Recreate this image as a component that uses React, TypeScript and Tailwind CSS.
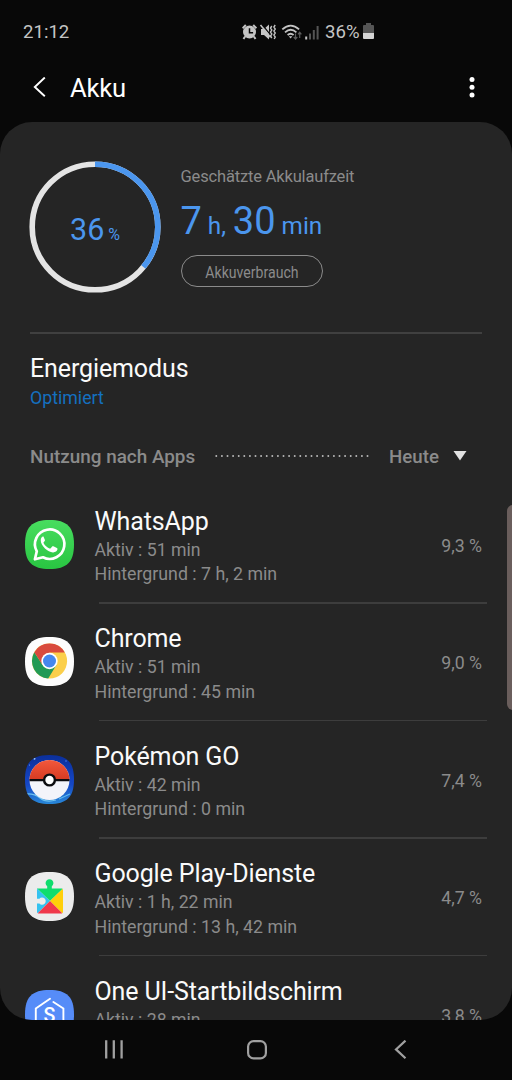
import React from 'react';

type AppUsage = {
  name: string;
  active: string;
  background: string;
  percent: string;
  icon: React.ReactNode;
};

// Rounded-square outline shared by all launcher icons
const SQUIRCLE = 'M24.5 0C42 0 49 7 49 24.5S42 49 24.5 49 0 42 0 24.5 7 0 24.5 0Z';

const WhatsAppIcon = () => (
  <svg width="49" height="49" viewBox="0 0 49 49" fill="none">
    <defs>
      <linearGradient id="wa" x1="0" y1="0" x2="0" y2="1">
        <stop offset="0" stopColor="#48dd5f" />
        <stop offset="1" stopColor="#29c542" />
      </linearGradient>
    </defs>
    <path d={SQUIRCLE} fill="url(#wa)" />
    <path
      d="M9.9 39.3 11.8 31.3A14.7 14.7 0 1 1 18 37.3Z"
      stroke="#fff"
      strokeWidth="2.7"
      strokeLinejoin="round"
    />
    <path
      transform="translate(-1.9 -1.3) scale(1.05)"
      d="M19.2 16.8c-1.2.2-2.4 1.7-2.4 3.7 0 5.4 7 11.4 11.6 11.6 2.2.1 4.1-1.3 4.3-2.7.1-1 0-1.2-.5-1.5l-3.3-1.6c-.6-.3-1-.2-1.4.3l-1.2 1.5c-.3.4-.7.4-1.2.2-2.4-1-4.3-2.8-5.5-5-.3-.5-.1-.8.2-1.1l.8-1c.3-.4.3-.8.1-1.2l-1.3-3c-.3-.4-.7-.4-1.2-.2Z"
      fill="#fff"
    />
  </svg>
);

const ChromeIcon = () => (
  <svg width="49" height="49" viewBox="0 0 49 49">
    <path d={SQUIRCLE} fill="#fdfdfd" />
    <circle cx="24.5" cy="24" r="17.6" fill="#fbcf4b" />
    <path d="M24.5 24 17.6 28 9.3 15.2A17.6 17.6 0 0 0 23.2 41.5L31.4 28Z" fill="#219a55" />
    <path d="M9.3 15.2A17.6 17.6 0 0 1 39.8 15.6H24.5V24L17.6 28Z" fill="#d94a3d" />
    <circle cx="24.5" cy="24" r="8.2" fill="#fff" />
    <circle cx="24.5" cy="24" r="6.5" fill="#4587ee" />
  </svg>
);

const PokemonIcon = () => (
  <svg width="49" height="49" viewBox="0 0 49 49">
    <defs>
      <linearGradient id="sky" x1="0" y1="0" x2="0" y2="1">
        <stop offset="0" stopColor="#0b2f9b" />
        <stop offset=".6" stopColor="#1547c6" />
        <stop offset="1" stopColor="#2888d8" />
      </linearGradient>
      <linearGradient id="red" x1="0" y1="0" x2="0" y2="1">
        <stop offset="0" stopColor="#f2583c" />
        <stop offset="1" stopColor="#d63a22" />
      </linearGradient>
      <clipPath id="pk">
        <path d={SQUIRCLE} />
      </clipPath>
    </defs>
    <g clipPath="url(#pk)">
      <path d="M0 0H49V49H0Z" fill="url(#sky)" />
      <path d="M0 39Q9 38 15 43T31 45" stroke="#6fc3ef" strokeWidth="1.3" fill="none" />
      <path d="M34 44l11-5" stroke="#5cb9ee" strokeWidth="1.3" />
      <circle cx="9.5" cy="3.8" r="1" fill="#9bc8ff" />
      <circle cx="4.5" cy="10" r=".6" fill="#79a9f5" />
      <circle cx="41" cy="6" r=".7" fill="#5f8ff0" />
    </g>
    <circle cx="24.5" cy="25" r="20" fill="#f3f4fa" />
    <path d="M4.5 25a20 20 0 0 1 40 0Z" fill="url(#red)" />
    <path d="M4.5 24H44.5V26.3H4.5Z" fill="#0c0c10" />
    <circle cx="24.5" cy="25" r="6.6" fill="#0c0c10" />
    <circle cx="24.5" cy="25" r="4.2" fill="#fff" />
  </svg>
);

const PlayServicesIcon = () => (
  <svg width="49" height="49" viewBox="0 0 49 49">
    <defs>
      <clipPath id="puzzle">
        <path d="M12 16.4H22.2V14.2A3.9 3.9 0 1 1 26.8 14.2V16.4H36.6Q38 16.4 38 17.8V40Q38 41.4 36.6 41.4H13.4Q12 41.4 12 40V31.4H14.4A3.6 3.6 0 1 0 14.4 26.7H12Z" />
      </clipPath>
    </defs>
    <path d={SQUIRCLE} fill="#ececec" />
    <g clipPath="url(#puzzle)">
      <path d="M11 5H39V15.5L25 29 11 15.5Z" fill="#0fdd6d" />
      <path d="M11 15.5 25 29 11 43Z" fill="#35c2f0" />
      <path d="M39 15.5 25 29 39 43Z" fill="#ffcf0a" />
      <path d="M11 43 25 29 39 43Z" fill="#f0384b" />
    </g>
  </svg>
);

const OneUiIcon = () => (
  <svg width="49" height="49" viewBox="0 0 49 49" fill="none">
    <path d={SQUIRCLE} fill="#568cf8" />
    <path d="M25 8.8 10.8 18.4V34L24.5 42 38.4 34V18.4L28.4 12" stroke="#fff" strokeWidth="1.9" strokeLinecap="round" />
    <text x="24.5" y="32.2" textAnchor="middle" fill="#fff" fontFamily="Roboto, sans-serif" fontSize="19.5" fontWeight="500">
      S
    </text>
  </svg>
);

const APPS: AppUsage[] = [
  { name: 'WhatsApp', active: '51 min', background: '7 h, 2 min', percent: '9,3 %', icon: <WhatsAppIcon /> },
  { name: 'Chrome', active: '51 min', background: '45 min', percent: '9,0 %', icon: <ChromeIcon /> },
  { name: 'Pokémon GO', active: '42 min', background: '0 min', percent: '7,4 %', icon: <PokemonIcon /> },
  { name: 'Google Play-Dienste', active: '1 h, 22 min', background: '13 h, 42 min', percent: '4,7 %', icon: <PlayServicesIcon /> },
  { name: 'One UI-Startbildschirm', active: '28 min', background: '', percent: '3,8 %', icon: <OneUiIcon /> },
];

const StatusIcons = () => (
  <svg width="78" height="20" viewBox="0 0 78 20" fill="none">
    {/* alarm */}
    <circle cx="7.5" cy="10" r="6.5" fill="#c4c4c4" />
    <path d="M.6 6.2 3.8 3M14.4 6.2 11.2 3M3.1 14.5 1.5 17M11.9 14.5 13.5 17" stroke="#c4c4c4" strokeWidth="2" />
    <path d="M7.5 6.2V10.7H11.1" stroke="#080808" strokeWidth="1.5" />
    {/* muted speaker with vibration */}
    <path d="M19 7H22L27 2.5V17.5L22 13H19Z" fill="#c4c4c4" />
    <path d="M19.5 2 29 13.5" stroke="#080808" strokeWidth="1.2" />
    <path d="M18.5 3 28.5 15.2" stroke="#c4c4c4" strokeWidth="1.6" />
    <path d="M29.8 4l-1.3 2 1.3 2-1.3 2 1.3 2-1.3 2 1.3 2M33.2 3l-1.3 2 1.3 2-1.3 2 1.3 2-1.3 2 1.3 2-1 2" stroke="#c4c4c4" strokeWidth="1.4" />
    {/* wifi */}
    <path d="M40.3 7.4Q48.7-.2 57.1 7.4M43 10.4Q48.7 5.2 54.4 10.4M45.6 13Q48.6 10.4 51.6 13" stroke="#c4c4c4" strokeWidth="1.8" />
    <path d="M46.8 14.2h3.6L48.6 16.4Z" fill="#c4c4c4" />
    <path d="M53.5 11.5V16.8M51.7 15l1.8 2 1.8-2M57.7 16V10.5M56 12.3l1.7-2 1.7 2" stroke="#5c5c5c" strokeWidth="1.2" />
    {/* signal bars */}
    <path d="M64.2 14.5V17.5" stroke="#c4c4c4" strokeWidth="2" />
    <path d="M68 11.5V17.5M71.8 8V17.5M75.6 4V17.5" stroke="#555" strokeWidth="2" />
  </svg>
);

const StatusBar = () => (
  <div className="flex h-[58px] items-center pt-1.5 pr-[138px] pl-[23px] text-[#c4c4c4]">
    <span className="flex-1 text-[18.6px] leading-none">21:12</span>
    <StatusIcons />
    <span className="ml-[5px] w-[35px] text-[18.6px] leading-none whitespace-nowrap">36%</span>
    <svg className="mb-px ml-[3px]" width="11" height="17" viewBox="0 0 11 17">
      <path d="M0 3Q0 2 1 2H3V0H8V2H10Q11 2 11 3V10H0Z" fill="#555" />
      <path d="M0 10H11V15Q11 16 10 16H1Q0 16 0 15Z" fill="#d4d4d4" />
    </svg>
  </div>
);

const TitleBar = () => (
  <div className="flex h-16 items-center pr-[37px] pb-1 pl-8 text-white">
    <svg width="15" height="22" viewBox="0 0 15 22" fill="none" stroke="currentColor" strokeWidth="1.9">
      <path d="M12.8 .5 2.8 10 12.8 19.3" />
    </svg>
    <h1 className="ml-[23px] flex-1 text-[25.6px] leading-8 tracking-[-.2px]">Akku</h1>
    <svg width="6" height="22" viewBox="0 0 6 22" fill="currentColor">
      <circle cx="3" cy="2.5" r="2.5" />
      <circle cx="3" cy="10.2" r="2.5" />
      <circle cx="3" cy="18" r="2.5" />
    </svg>
  </div>
);

const BatterySummary = () => (
  <div className="flex pt-[39px] pl-[29px]">
    <div className="grid size-[132px] place-items-center text-[#4b96ee]">
      <svg className="col-start-1 row-start-1 -rotate-90" width="132" height="132" viewBox="0 0 132 132" fill="none" strokeWidth="5.6">
        <circle cx="66" cy="66" r="62.8" stroke="#e4e4e4" />
        <circle cx="66" cy="66" r="62.8" stroke="#4b96ee" pathLength="100" strokeDasharray="36 64" />
      </svg>
      <div className="col-start-1 row-start-1 flex items-baseline pt-1.5">
        <span className="text-[30.5px] leading-9">36</span>
        <span className="ml-1 text-[16px]">%</span>
      </div>
    </div>
    <div className="ml-[19.5px] pt-[5px]">
      <p className="text-[16.5px] leading-[21px] tracking-[-.17px] text-[#8b8b8b]">Geschätzte Akkulaufzeit</p>
      <div className="mt-[9px] flex h-[50px] items-baseline text-[24.3px] leading-[50px] text-[#4b96ee]">
        <span className="text-[38px]">7</span>
        <span className="ml-[6px] w-[25px]">h,</span>
        <span className="text-[38px]">30</span>
        <span className="ml-[6px]">min</span>
      </div>
      <button className="mt-[9px] block h-8 w-[142px] rounded-full border-[1.5px] border-[#8b8b8b] text-[#8b8b8b]">
        <span className="block origin-center scale-x-[.84] pt-px text-[16.8px] leading-7">Akkuverbrauch</span>
      </button>
    </div>
  </div>
);

const AppRow = ({ app }: { app: AppUsage }) => (
  <li className="flex h-[117.5px] shrink-0 pl-[25px]">
    <div className="mt-[34px] h-[49px] w-[49px] shrink-0">{app.icon}</div>
    <div className="ml-[20.5px] flex-1">
      <div className="flex h-[116.5px] pt-5 pr-[30px]">
        <div className="flex-1">
          <h3 className="text-[25px] leading-8 tracking-[-.12px] text-[#fafafa]">{app.name}</h3>
          <p className="text-[17.7px] leading-[24.7px] text-[#8b8b8b]">Aktiv : {app.active}</p>
          {app.background && (
            <p className="text-[17.75px] leading-[25px] text-[#8b8b8b]">Hintergrund : {app.background}</p>
          )}
        </div>
        <span className="mt-7 text-[17.7px] leading-6 text-[#8b8b8b]">{app.percent}</span>
      </div>
      <div className="mr-[25px] ml-[4.5px] h-[1.5px] bg-[#3d3d3d]" />
    </div>
  </li>
);

const NavBar = () => (
  <nav className="flex h-[60px] items-center justify-between pr-[103px] pl-[104px] text-[#a0a0a0]">
    <svg width="20" height="20" viewBox="0 0 20 20" fill="none" stroke="currentColor" strokeWidth="2.3">
      <path d="M2.2 .2V18.6M9.8 .2V18.6M17.6 .2V18.6" />
    </svg>
    <svg width="20" height="20" viewBox="0 0 20 20" fill="none" stroke="currentColor" strokeWidth="2.2">
      <rect x="1.1" y="1.1" width="17.8" height="17.3" rx="5.5" />
    </svg>
    <svg width="20" height="20" viewBox="0 0 20 20" fill="none" stroke="currentColor" strokeWidth="2.2">
      <path d="M16.5 .6 7 9.4 16.5 18.2" />
    </svg>
  </nav>
);

export default function App() {
  return (
    <div className="relative flex h-[1080px] w-[512px] flex-col overflow-hidden bg-[#080808] font-['Roboto',sans-serif]">
      <StatusBar />
      <TitleBar />

      <main className="h-[898px] overflow-hidden rounded-[32px] bg-[#252525]">
        <BatterySummary />

        <div className="mx-[30px] mt-[39px] h-[1.5px] bg-[#404040]" />

        <section className="mt-[19px] px-[30px]">
          <h2 className="text-[25px] leading-8 tracking-[-.12px] text-[#fafafa]">Energiemodus</h2>
          <p className="pt-px text-[17.75px] leading-6 text-[#1470c0]">Optimiert</p>
        </section>

        <div className="mt-[35px] flex h-6 items-center pr-[45px] pl-[30px] text-[18.9px] font-medium text-[#8b8b8b]">
          <span className="w-[185px] pt-0.5">Nutzung nach Apps</span>
          <svg className="mb-0.5" width="154" height="2" viewBox="0 0 154 2">
            <path d="M.5 1H154" stroke="#d8d8d8" strokeWidth="1.6" strokeDasharray="1.6 4" />
          </svg>
          <span className="ml-5 flex-1 pt-0.5 text-[18.7px]">Heute</span>
          <svg className="mb-0.5" width="14" height="12" viewBox="0 0 14 12">
            <path d="M.5 1H13.5L7 10.5Z" fill="#e2e2e2" />
          </svg>
        </div>

        <ul className="mt-[17px]">
          {APPS.map((app) => (
            <AppRow key={app.name} app={app} />
          ))}
        </ul>
      </main>

      <NavBar />

      {/* edge panel handle */}
      <div className="absolute top-[505px] -right-2 h-[205px] w-[13.5px] rounded-md bg-[#6a5e5c]" />
    </div>
  );
}
